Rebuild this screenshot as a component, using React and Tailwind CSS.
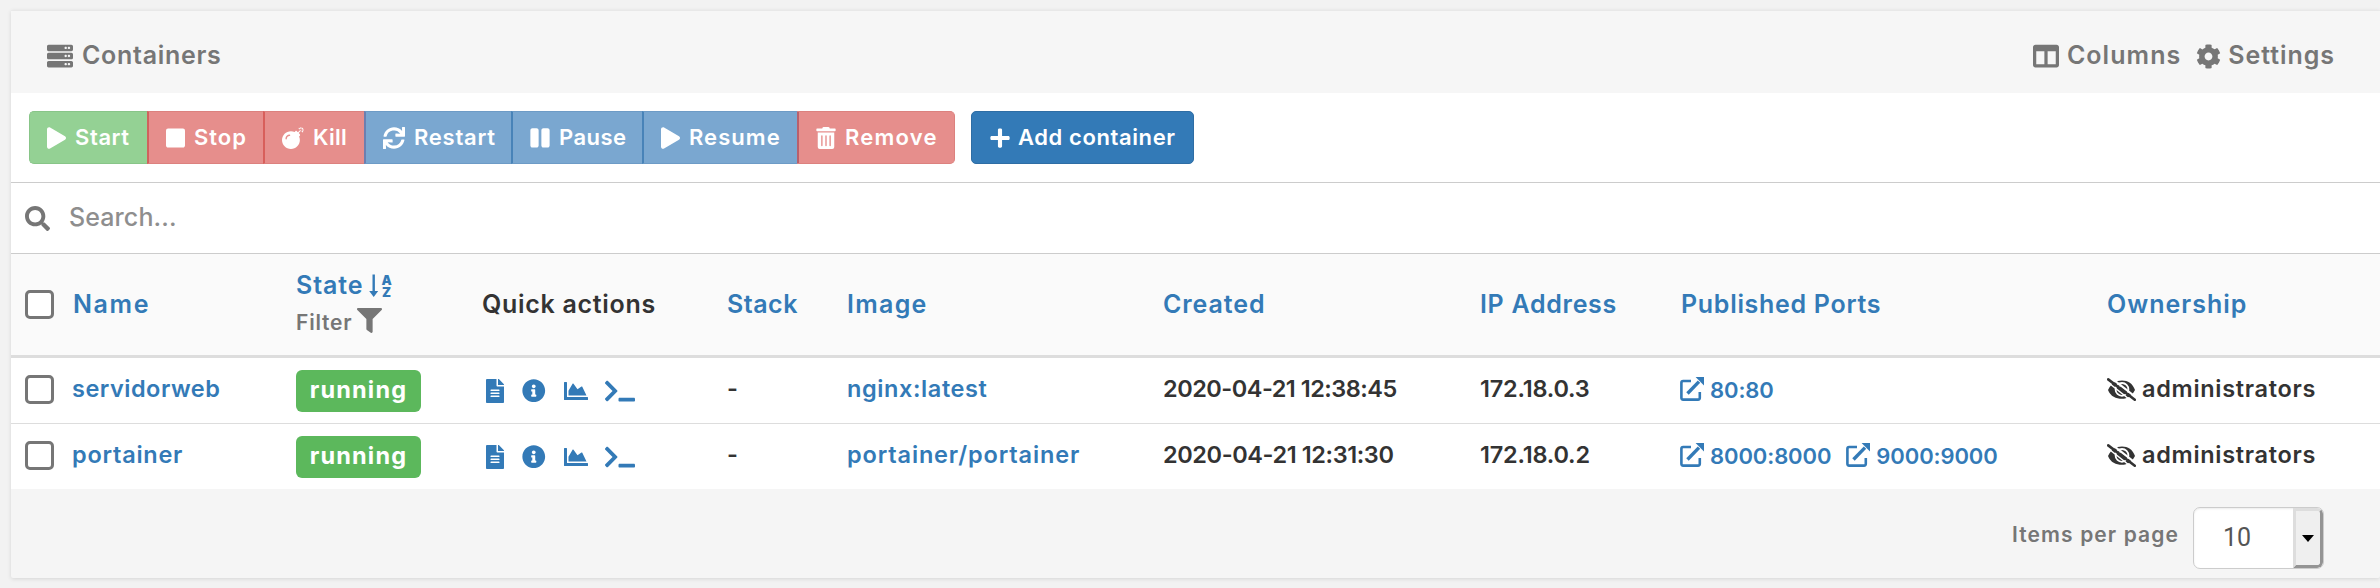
import React from "react";
import {
  FaServer, FaPlay, FaStop, FaBomb, FaSync, FaPause, FaTrashAlt, FaPlus, FaSearch,
  FaColumns, FaCog, FaFileAlt, FaInfoCircle, FaChartArea, FaTerminal, FaFilter,
} from "react-icons/fa";

const COLS =
  "grid grid-cols-[285px_186px_245px_120px_316px_317px_200px_427px_1fr] items-center";

function ExternalLinkIcon() {
  return (
    <svg viewBox="0 0 24 24" className="h-6 w-6 shrink-0" fill="none" stroke="currentColor" strokeWidth="2.6">
      <path d="M11 4H3.2Q1.4 4 1.4 5.8V20.8Q1.4 22.6 3.2 22.6H18Q19.8 22.6 19.8 20.8V15" />
      <path d="M7.5 16.5 19 4.6" strokeWidth="3.4" />
      <path d="M15.6 0H24V8.6Z" fill="currentColor" stroke="none" />
    </svg>
  );
}

function EyeSlashIcon() {
  return (
    <svg viewBox="0 0 29 23" className="h-[23px] w-[29px] shrink-0" fill="none">
      <path d="M1 12C4 5.5 9 2.6 15 2.6S25.500 5.500 28 12C25 18 20.500 20.800 14.800 20.800S3.500 18.500 1 12Z" fill="#333" />
      <circle cx="15" cy="11.400" r="6.400" stroke="#fff" strokeWidth="1.800" />
      <path d="M12.200 8.800Q13.300 7.400 15 7.400" stroke="#fff" strokeWidth="1.400" />
      <path d="M3 -1 30 20.200" stroke="#fff" strokeWidth="2.200" />
      <path d="M0 3.600 26 24.200" stroke="#fff" strokeWidth="1.400" />
      <path d="M1.200 1.400 27.800 21.800" stroke="#333" strokeWidth="2.600" strokeLinecap="round" />
    </svg>
  );
}

function SortAlphaIcon() {
  return (
    <span className="flex h-6 items-center">
      <svg viewBox="0 0 10 24" className="h-6 w-[10px] shrink-0" fill="currentColor">
        <path d="M3.500 0.500H5.900V17H9.200L4.700 23 0.200 17H3.500Z" />
      </svg>
      <span className="ml-[2px] flex flex-col items-center text-[13px] leading-[12.5px] font-black">
        <span>A</span>
        <span>Z</span>
      </span>
    </span>
  );
}

function Checkbox() {
  return <span className="block size-[29px] shrink-0 rounded-[5px] border-[3px] border-[#767676] bg-white" />;
}

const BUTTONS = [
  { label: "Start", Icon: FaPlay, size: "w-[118px] rounded-l-[5px] border-l bg-[#94d194] border-[#88c588]", icon: "w-[19px]", text: "tracking-[0.6px]" },
  { label: "Stop", Icon: FaStop, size: "w-[116px] bg-[#e68e8c] border-[#dc817e] border-l-2 border-l-[#d0625d]", icon: "w-[19px]", text: "tracking-[1px]" },
  { label: "Kill", Icon: FaBomb, size: "w-[101px] bg-[#e68e8c] border-[#dc817e] border-l-2 border-l-[#d85f5b]", icon: "w-[22px]", text: "tracking-[0.3px]" },
  { label: "Restart", Icon: FaSync, size: "w-[147px] bg-[#7aa7d0] border-[#6d9bc6] border-l-2 border-l-[#6c7fb0]", icon: "w-[22px]", text: "tracking-[0.75px]" },
  { label: "Pause", Icon: FaPause, size: "w-[131px] bg-[#7aa7d0] border-[#6d9bc6] border-l-2 border-l-[#4883b8]", icon: "w-[20px]", text: "tracking-[0.45px]" },
  { label: "Resume", Icon: FaPlay, size: "w-[155px] bg-[#7aa7d0] border-[#6d9bc6] border-l-2 border-l-[#4883b8]", icon: "w-[19px]", text: "tracking-[1.05px]" },
  { label: "Remove", Icon: FaTrashAlt, size: "w-[158px] rounded-r-[5px] border-r bg-[#e68e8c] border-[#dc817e] border-l-2 border-l-[#b8606c]", icon: "w-[20px]", text: "tracking-[1.2px]" },
];

const ROWS = [
  {
    name: "servidorweb", nameCls: "tracking-[0.5px]",
    image: "nginx:latest", imageCls: "tracking-[0.6px]",
    created: "2020-04-21 12:38:45", createdCls: "tracking-[-0.5px]",
    ip: "172.18.0.3", ports: ["80:80"],
  },
  {
    name: "portainer", nameCls: "tracking-[0.75px]",
    image: "portainer/portainer", imageCls: "tracking-[0.85px]",
    created: "2020-04-21 12:31:30", createdCls: "tracking-[-0.4px]",
    ip: "172.18.0.2", ports: ["8000:8000", "9000:9000"],
  },
];

function Row({ row, className }) {
  return (
    <div className={`${COLS} bg-white pb-[3px] text-[23.5px] ${className}`}>
      <div className="flex items-center pl-[14px] text-[#337ab7]">
        <Checkbox />
        <a className={`ml-[18px] ${row.nameCls}`}>{row.name}</a>
      </div>
      <div className="pt-[3px]">
        <span className="flex h-[42px] w-[125px] items-center justify-center rounded-[6px] bg-[#5cb85c] pb-[2px] font-bold tracking-[1.15px] text-white">
          running
        </span>
      </div>
      <div className="flex items-center pt-[3px] pl-[4px] text-[#337ab7]">
        <FaFileAlt className="h-6 w-[18px]" />
        <FaInfoCircle className="ml-[18px] size-[23.5px]" />
        <FaChartArea className="ml-[18px] size-[24px]" />
        <FaTerminal className="ml-[17px] h-6 w-[30px]" />
      </div>
      <div>-</div>
      <div className={`text-[#337ab7] ${row.imageCls}`}>{row.image}</div>
      <div className={row.createdCls}>{row.created}</div>
      <div className="tracking-[-0.2px]">{row.ip}</div>
      <div className="flex gap-[15px] text-[22px] tracking-[-0.1px] text-[#337ab7]">
        {row.ports.map((port) => (
          <a key={port} className="flex items-center gap-[6px]">
            <ExternalLinkIcon />
            <span className="pt-[2px]">{port}</span>
          </a>
        ))}
      </div>
      <div className="flex items-center gap-[6px]">
        <EyeSlashIcon />
        <span className="tracking-[0.7px]">administrators</span>
      </div>
    </div>
  );
}

export default function App() {
  return (
    <div className="h-[588px] w-[2380px] overflow-hidden bg-[#f2f2f2] pt-[10px] pl-[11px] font-['Inter',sans-serif] font-semibold whitespace-nowrap text-[#333]">
      <div className="flex h-[568px] flex-col rounded-[2px] border-t border-[#e8e8e8] bg-[#f5f5f5] shadow-[0_1px_4px_rgba(0,0,0,0.12)]">
        <div className="flex h-[82px] shrink-0 items-center justify-between bg-[#f6f6f6] pt-[8px] pr-[45px] pl-[36px] text-[25px] text-[#767676]">
          <div className="flex items-center">
            <FaServer className="size-[26px]" />
            <span className="ml-[9px] tracking-[0.7px]">Containers</span>
          </div>
          <div className="flex items-center">
            <FaColumns className="size-[26px]" />
            <span className="ml-[8px] tracking-[1.05px]">Columns</span>
            <FaCog className="ml-[15px] size-[25px]" />
            <span className="ml-[7px] tracking-[0.95px]">Settings</span>
          </div>
        </div>

        <div className="flex h-[90px] shrink-0 items-center border-b border-[#ccc] bg-white pl-[18px] text-[22px] text-white">
          {BUTTONS.map(({ label, Icon, size, icon, text }) => (
            <button key={label} className={`flex h-[53px] items-center border-y pl-[17px] ${size}`}>
              <Icon className={`h-[22px] shrink-0 ${icon}`} />
              <span className={`ml-[9px] ${text}`}>{label}</span>
            </button>
          ))}
          <button className="ml-[16px] flex h-[53px] w-[223px] items-center rounded-[5px] border border-[#2e6da4] bg-[#337ab7] pl-[18px]">
            <FaPlus className="h-[22px] w-[20px]" />
            <span className="ml-[8px] tracking-[0.6px]">Add container</span>
          </button>
        </div>

        <div className="flex h-[71px] shrink-0 items-center border-b border-[#ccc] bg-white pl-[14px] text-[25px]">
          <FaSearch className="size-[25px] text-[#767676]" />
          <span className="ml-[19px] font-medium tracking-[0.1px] text-[#8e8e8e]">Search...</span>
        </div>

        <div className={`${COLS} h-[104px] shrink-0 border-b-[3px] border-[#ddd] bg-[#fafafa] text-[25px] text-[#337ab7]`}>
          <div className="flex items-center pl-[14px]">
            <Checkbox />
            <span className="ml-[19px] tracking-[1.6px]">Name</span>
          </div>
          <div className="flex flex-col">
            <div className="flex h-[37px] items-center">
              <span className="tracking-[0.9px]">State</span>
              <span className="ml-[6px]"><SortAlphaIcon /></span>
            </div>
            <div className="flex h-[37px] items-center text-[21px] text-[#767676]">
              <span className="tracking-[0.8px]">Filter</span>
              <FaFilter className="mb-[5px] ml-[5px] size-[25px]" />
            </div>
          </div>
          <div className="tracking-[0.7px] text-[#333]">Quick actions</div>
          <div className="tracking-[0.5px]">Stack</div>
          <div className="tracking-[1.3px]">Image</div>
          <div className="tracking-[0.9px]">Created</div>
          <div className="tracking-[0.7px]">IP Address</div>
          <div className="pl-px tracking-[0.7px]">Published Ports</div>
          <div className="tracking-[1px]">Ownership</div>
        </div>

        <Row row={ROWS[0]} className="h-[66px] shrink-0 border-b border-[#ddd]" />
        <Row row={ROWS[1]} className="h-[65px] shrink-0" />

        <div className="flex flex-1 items-start justify-end pt-[18px] pr-[56px] text-[#767676]">
          <span className="mt-[12px] text-[21px] tracking-[1.1px]">Items per page</span>
          <div className="ml-[14px] flex h-[62px] w-[131px] overflow-hidden rounded-[7px] border border-[#ccc] bg-white shadow-[inset_0_1px_2px_rgba(0,0,0,0.08)]">
            <span className="flex flex-1 items-center pl-[29px] font-['Roboto',sans-serif] text-[25px] font-normal text-[#555]">10</span>
            <span className="flex w-[30px] items-center justify-center rounded-r-[5px] border-[3px] border-t-[#ddd] border-r-[#949494] border-b-[#949494] border-l-[#ddd] bg-[#efefef]">
              <svg viewBox="0 0 12 7" className="h-[7px] w-3" fill="#000">
                <path d="M0 0H12L6 7Z" />
              </svg>
            </span>
          </div>
        </div>
      </div>
    </div>
  );
}
